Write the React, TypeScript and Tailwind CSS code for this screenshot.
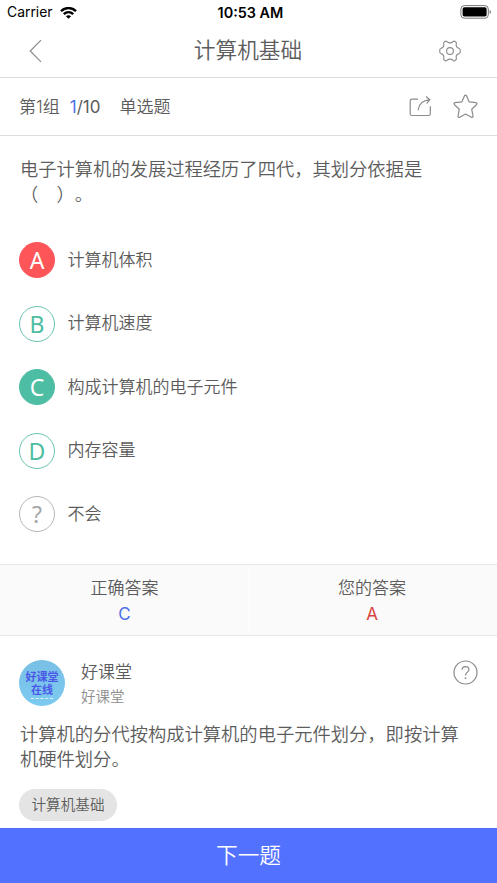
import { FC, ReactNode } from 'react';

type OptionState = 'wrong' | 'correct' | 'idle' | 'unknown';

interface Option {
    label: string;
    text: string;
    state: OptionState;
}

interface AnswerCellProps {
    title: string;
    children: ReactNode;
}

const options: Option[] = [
    { label: 'A', text: '计算机体积', state: 'wrong' },
    { label: 'B', text: '计算机速度', state: 'idle' },
    { label: 'C', text: '构成计算机的电子元件', state: 'correct' },
    { label: 'D', text: '内存容量', state: 'idle' },
    { label: '?', text: '不会', state: 'unknown' },
];

const badgeStyles: Record<OptionState, string> = {
    wrong: 'bg-[#fd5558] border-[#fd5558] text-white',
    correct: 'bg-[#4dbda3] border-[#4dbda3] text-white',
    idle: 'bg-white border-[#68c3af] text-[#4dbda3]',
    unknown: 'bg-white border-[#b5b5b5] text-[#a8a8a8]',
};

const StatusBar: FC = () => (
    <div className="grid h-[25px] shrink-0 grid-cols-3 items-center pl-[7px] pr-[5px] pt-px font-['Inter',sans-serif] font-normal text-black">
        <div className="flex items-center gap-[7px]">
            <span className="text-[13.9px] leading-none">Carrier</span>
            <svg width="17" height="12" viewBox="0 0 17 12" fill="none" stroke="currentColor" strokeWidth="2.5">
                <path d="M1 4.1C5.3.1 11.7.1 16 4.1" />
                <path d="M3.8 7.2C6.5 4.7 10.5 4.7 13.2 7.2" />
                <path d="M8.5 11.8 5.9 9.2C7.4 7.9 9.6 7.9 11.1 9.2Z" fill="currentColor" stroke="none" />
            </svg>
        </div>
        <span className="whitespace-nowrap pl-0.5 text-center text-[14.4px] font-semibold leading-none">10:53 AM</span>
        <svg className="mb-[2px] justify-self-end" width="32" height="14" viewBox="0 0 32 14" fill="none">
            <rect x=".9" y=".6" width="27.4" height="12.6" rx="3.4" stroke="#777" />
            <rect x="2.6" y="2.3" width="24" height="9.2" rx="1.7" fill="#000" />
            <path d="M29.6 5v4c1.7-.5 1.7-3.500 0-4Z" fill="#777" />
        </svg>
    </div>
);

const NavBar: FC = () => (
    <header className="grid h-[53px] shrink-0 grid-cols-[1fr_auto_1fr] items-center border-b border-[#dedede] pl-[29px] pr-[36px]">
        <button aria-label="返回">
            <svg width="13" height="24" viewBox="0 0 13 24" fill="none" stroke="#8b8b8b" strokeWidth="1.2">
                <path d="M12 1.200 1.200 12 12 22.800" />
            </svg>
        </button>
        <h1 className="-mr-[3px] pl-[3px] text-[21.7px] leading-none">计算机基础</h1>
        <button aria-label="设置" className="-mt-px justify-self-end">
            <svg width="22" height="22" viewBox="0 0 22 22" fill="none" stroke="#8b8b8b" strokeWidth="1.1" strokeLinejoin="round">
                <path d="M6.300 1.300Q7.200.9 8 1.700 11 4 14 1.700 14.800.9 15.700 1.300L17 2.200Q17.500 2.700 17.300 3.700C16.700 6.300 18 7.800 20 8.400Q21.200 8.800 21.200 9.700V12.300Q21.200 13.200 20 13.600C18 14.200 16.700 15.700 17.300 18.300Q17.500 19.300 17 19.800L15.700 20.700Q14.800 21.100 14 20.300 11 18 8 20.300 7.200 21.100 6.300 20.700L5 19.800Q4.500 19.300 4.700 18.300C5.300 15.700 4 14.200 2 13.600Q.8 13.200.8 12.300V9.700Q.8 8.800 2 8.400C4 7.800 5.300 6.300 4.700 3.700Q4.500 2.700 5 2.200Z" />
                <circle cx="11" cy="11" r="3.400" />
            </svg>
        </button>
    </header>
);

const QuestionBar: FC = () => (
    <div className="flex h-[58px] shrink-0 items-center border-b border-[#dedede] pl-[19px] pr-[19px] text-[17px] leading-none">
        <span className="pt-0.5">第1组</span>
        <span className="ml-[10px] pt-0.5 font-normal">
            <span className="text-[#4d70e8]">1</span>/10
        </span>
        <span className="ml-[19px] pt-0.5">单选题</span>
        <div className="ml-auto flex items-center gap-[21px]">
            <svg width="23" height="22" viewBox="0 0 23 22" fill="none" stroke="#8b8b8b" strokeWidth="1.2" strokeLinecap="round" strokeLinejoin="round">
                <path d="M8.500 3.200H3Q1.200 3.200 1.200 5V17.700Q1.200 19.500 3 19.500H19.500Q21.300 19.500 21.300 17.700V10.500" />
                <path d="M9.300 13.600C9.800 8.300 13 4.700 20.700 3.700M17.300.8 20.900 3.700 18 7.200" />
            </svg>
            <svg width="25" height="25" viewBox="0 0 25 25" fill="none" stroke="#8b8b8b" strokeWidth="1.2" strokeLinejoin="round">
                <path d="M11.400 1.900Q12.500.2 13.600 1.900L16.200 7.900 22.900 8.700Q24.900 9.200 23.500 10.700L18.700 15.200 20 22Q20.100 23.900 18.300 23.200L12.500 19.900 6.700 23.200Q4.900 23.900 5 22L6.300 15.200 1.500 10.700Q.1 9.200 2.100 8.700L8.800 7.900Z" />
            </svg>
        </div>
    </div>
);

const OptionRow: FC<{ option: Option }> = ({ option }) => (
    <li className="flex h-9 items-center gap-[12.5px]">
        <span
            className={`flex size-9 items-center justify-center rounded-full border-[1.3px] pt-px
                font-['Noto_Sans',sans-serif] text-[23px] font-normal leading-none ${badgeStyles[option.state]}`}
        >
            {option.label}
        </span>
        <span className="text-[17px] leading-none">{option.text}</span>
    </li>
);

const AnswerCell: FC<AnswerCellProps> = ({ title, children }) => (
    <div className="flex flex-col items-center pt-[13px] text-[17px]">
        <span className="leading-[20px]">{title}</span>
        <span className="mt-[6px] font-normal leading-[20px]">{children}</span>
    </div>
);

const App: FC = () => {
    return (
        <div className="flex h-[883px] w-full flex-col overflow-hidden bg-white font-['Inter','Noto_Sans_CJK_SC',sans-serif] font-[350] text-[#5c5c5c] [text-spacing-trim:space-all]">
            <StatusBar />
            <NavBar />
            <QuestionBar />

            {/* Question */}
            <main className="h-[428px] shrink-0 pl-5 pr-[18px] pt-[21px]">
                <p className="text-[18.3px] leading-[25px]">
                    电子计算机的发展过程经历了四代，其划分依据是
                    <br />
                    （　）。
                </p>
                <ul className="-ml-px mt-[35px] flex flex-col gap-[27.6px]">
                    {options.map((option) => (
                        <OptionRow key={option.label} option={option} />
                    ))}
                </ul>
            </main>

            {/* Answers */}
            <section className="grid h-[72px] shrink-0 grid-cols-[249px_1px_1fr] border-y border-[#e6e6e6] bg-[#fafafa] pr-[3px]">
                <AnswerCell title="正确答案">
                    <span className="text-[#4d70e8]">C</span>
                </AnswerCell>
                <div className="bg-white" />
                <AnswerCell title="您的答案">
                    <span className="text-[#d64541]">A</span>
                </AnswerCell>
            </section>

            {/* Explanation */}
            <section className="flex-1 px-5 pt-6">
                <div className="-ml-px flex h-[46px]">
                    <div className="flex size-[46px] flex-col items-center rounded-full bg-linear-to-b from-[#79bfe6] to-[#7ccaf0] pt-[11px] text-[11px] font-bold leading-[13px] text-[#4c57e8]">
                        <span>好课堂</span>
                        <span>在线</span>
                        <span className="mt-px h-0 w-[22px] border-t border-dashed border-white/80" />
                    </div>
                    <div className="ml-4 flex flex-col">
                        <span className="mt-[3px] text-[17px] leading-[18px]">好课堂</span>
                        <span className="mt-[8px] text-[14.5px] leading-[16px] text-[#8e8e8e]">好课堂</span>
                    </div>
                    <svg className="-mr-px ml-auto" width="25" height="25" viewBox="0 0 25 25" fill="none" stroke="#8b8b8b" strokeWidth="1.2">
                        <circle cx="12.500" cy="12.500" r="11.500" />
                        <path d="M9 9.800C9 5.500 16 5.600 16 9.600 16 12.200 12.500 12.200 12.500 15.500" />
                        <circle cx="12.500" cy="18.200" r=".9" fill="#8b8b8b" stroke="none" />
                    </svg>
                </div>
                <p className="mt-4 text-[18.3px] leading-[24.5px]">
                    计算机的分代按构成计算机的电子元件划分，即按计算
                    <br />
                    机硬件划分。
                </p>
                <span className="-ml-px mt-[18px] flex h-8 w-[98px] items-center justify-center rounded-full bg-[#e4e4e4] pt-px text-[14.6px] leading-none">
                    计算机基础
                </span>
            </section>

            <button className="h-[55px] shrink-0 bg-[#5271ff] pt-px text-[21.7px] leading-none text-white">下一题</button>
        </div>
    );
};

export default App;
